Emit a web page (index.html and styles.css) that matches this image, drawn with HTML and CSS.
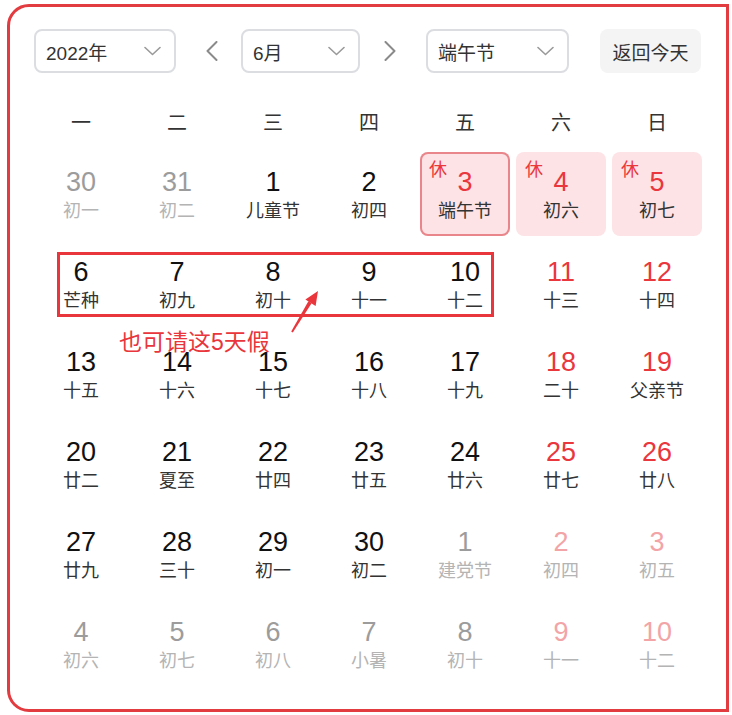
FILE: index.html
```html
<!DOCTYPE html>
<html lang="zh">
<head>
<meta charset="utf-8">
<title>日历</title>
<link rel="stylesheet" href="styles.css">
</head>
<body>
<div class="frame">
  <div class="toolbar">
    <div class="select select-year"><span>2022年</span>
      <svg class="caret" width="17" height="10" viewBox="0 0 17 10"><polyline points="1,1.5 8.5,8.5 16,1.5"/></svg>
    </div>
    <svg class="nav nav-prev" width="12" height="20" viewBox="0 0 12 20"><polyline points="10.5,1 1.5,10 10.5,19"/></svg>
    <div class="select select-month"><span>6月</span>
      <svg class="caret" width="17" height="10" viewBox="0 0 17 10"><polyline points="1,1.5 8.5,8.5 16,1.5"/></svg>
    </div>
    <svg class="nav nav-next" width="12" height="20" viewBox="0 0 12 20"><polyline points="1.5,1 10.5,10 1.5,19"/></svg>
    <div class="select select-fest"><span>端午节</span>
      <svg class="caret" width="17" height="10" viewBox="0 0 17 10"><polyline points="1,1.5 8.5,8.5 16,1.5"/></svg>
    </div>
    <div class="today-btn">返回今天</div>
  </div>

  <div class="week-head">
    <span>一</span><span>二</span><span>三</span><span>四</span><span>五</span><span>六</span><span>日</span>
  </div>

  <div class="days">
    <div class="cell other"><span class="num">30</span><span class="lunar">初一</span></div>
    <div class="cell other"><span class="num">31</span><span class="lunar">初二</span></div>
    <div class="cell"><span class="num">1</span><span class="lunar">儿童节</span></div>
    <div class="cell"><span class="num">2</span><span class="lunar">初四</span></div>
    <div class="cell red holiday selected"><span class="rest">休</span><span class="num">3</span><span class="lunar">端午节</span></div>
    <div class="cell red holiday"><span class="rest">休</span><span class="num">4</span><span class="lunar">初六</span></div>
    <div class="cell red holiday"><span class="rest">休</span><span class="num">5</span><span class="lunar">初七</span></div>

    <div class="cell"><span class="num">6</span><span class="lunar">芒种</span></div>
    <div class="cell"><span class="num">7</span><span class="lunar">初九</span></div>
    <div class="cell"><span class="num">8</span><span class="lunar">初十</span></div>
    <div class="cell"><span class="num">9</span><span class="lunar">十一</span></div>
    <div class="cell"><span class="num">10</span><span class="lunar">十二</span></div>
    <div class="cell red"><span class="num">11</span><span class="lunar">十三</span></div>
    <div class="cell red"><span class="num">12</span><span class="lunar">十四</span></div>

    <div class="cell"><span class="num">13</span><span class="lunar">十五</span></div>
    <div class="cell"><span class="num">14</span><span class="lunar">十六</span></div>
    <div class="cell"><span class="num">15</span><span class="lunar">十七</span></div>
    <div class="cell"><span class="num">16</span><span class="lunar">十八</span></div>
    <div class="cell"><span class="num">17</span><span class="lunar">十九</span></div>
    <div class="cell red"><span class="num">18</span><span class="lunar">二十</span></div>
    <div class="cell red"><span class="num">19</span><span class="lunar">父亲节</span></div>

    <div class="cell"><span class="num">20</span><span class="lunar">廿二</span></div>
    <div class="cell"><span class="num">21</span><span class="lunar">夏至</span></div>
    <div class="cell"><span class="num">22</span><span class="lunar">廿四</span></div>
    <div class="cell"><span class="num">23</span><span class="lunar">廿五</span></div>
    <div class="cell"><span class="num">24</span><span class="lunar">廿六</span></div>
    <div class="cell red"><span class="num">25</span><span class="lunar">廿七</span></div>
    <div class="cell red"><span class="num">26</span><span class="lunar">廿八</span></div>

    <div class="cell"><span class="num">27</span><span class="lunar">廿九</span></div>
    <div class="cell"><span class="num">28</span><span class="lunar">三十</span></div>
    <div class="cell"><span class="num">29</span><span class="lunar">初一</span></div>
    <div class="cell"><span class="num">30</span><span class="lunar">初二</span></div>
    <div class="cell other"><span class="num">1</span><span class="lunar">建党节</span></div>
    <div class="cell other red"><span class="num">2</span><span class="lunar">初四</span></div>
    <div class="cell other red"><span class="num">3</span><span class="lunar">初五</span></div>

    <div class="cell other"><span class="num">4</span><span class="lunar">初六</span></div>
    <div class="cell other"><span class="num">5</span><span class="lunar">初七</span></div>
    <div class="cell other"><span class="num">6</span><span class="lunar">初八</span></div>
    <div class="cell other"><span class="num">7</span><span class="lunar">小暑</span></div>
    <div class="cell other"><span class="num">8</span><span class="lunar">初十</span></div>
    <div class="cell other red"><span class="num">9</span><span class="lunar">十一</span></div>
    <div class="cell other red"><span class="num">10</span><span class="lunar">十二</span></div>
  </div>
</div>

<div class="mark-box"></div>
<div class="mark-text">也可请这5天假</div>
<svg class="mark-arrow" width="45" height="55" viewBox="280 285 45 55">
  <polygon points="291.2,331.6 292.8,332.4 311.6,303.2 308.4,301.2"/>
  <polygon points="318,291 315.6,306 305.4,299.6"/>
</svg>
</body>
</html>
```

FILE: styles.css
```css
html, body {
  margin: 0;
  padding: 0;
  background: #ffffff;
}

body {
  font-family: "Liberation Sans", "Noto Sans CJK SC", sans-serif;
  color: #333333;
}

.frame {
  box-sizing: border-box;
  width: 722px;
  height: 708px;
  margin: 4px 0 0 7px;
  border: 3px solid #e23b40;
  border-radius: 22px 0 0 22px;
  padding: 22px 0 0 23px;
}

.toolbar {
  display: flex;
  align-items: center;
  height: 44px;
}

.select {
  box-sizing: border-box;
  height: 44px;
  border: 2px solid #dcdde1;
  border-radius: 8px;
  display: flex;
  align-items: center;
  justify-content: space-between;
  padding: 0 13px 0 10px;
  font-size: 19px;
  color: #333333;
}

.select-year {
  width: 142px;
  margin-left: 1px;
}

.select-month {
  width: 119px;
  margin-left: 23px;
}

.select-fest {
  width: 143px;
  margin-left: 30px;
}

.caret polyline,
.nav polyline {
  fill: none;
  stroke-linecap: round;
  stroke-linejoin: round;
}

.caret polyline {
  stroke: #9a9a9a;
  stroke-width: 1.6;
}

.nav polyline {
  stroke: #8a8a8a;
  stroke-width: 2;
}

.nav-prev {
  margin-left: 30px;
}

.nav-next {
  margin-left: 24px;
}

.today-btn {
  box-sizing: border-box;
  width: 101px;
  height: 44px;
  margin-left: 31px;
  border-radius: 8px;
  background: #f4f4f5;
  display: flex;
  align-items: center;
  justify-content: center;
  font-size: 19px;
  color: #333333;
}

.week-head {
  display: grid;
  grid-template-columns: repeat(7, 96px);
  margin-top: 30px;
  height: 40px;
  line-height: 40px;
  text-align: center;
  font-size: 20px;
  color: #333333;
}

.days {
  display: grid;
  grid-template-columns: repeat(7, 96px);
  grid-auto-rows: 84px;
  row-gap: 6px;
  margin-top: 9px;
}

.cell {
  position: relative;
  margin: 0 3px;
  border-radius: 8px;
  display: flex;
  flex-direction: column;
  align-items: center;
  padding-top: 14px;
  box-sizing: border-box;
}

.num {
  font-size: 27px;
  line-height: 32px;
  color: #111111;
}

.lunar {
  margin-top: 2px;
  font-size: 18px;
  line-height: 22px;
  color: #333333;
}

.red .num {
  color: #ea363d;
}

.other .num {
  color: #9c9c9c;
}

.other .lunar {
  color: #b4b4b4;
}

.other.red .num {
  color: #f2a4a7;
}

.holiday {
  background: #fde3e5;
}

.selected {
  box-shadow: inset 0 0 0 2px #e8868b;
}

.rest {
  position: absolute;
  top: 7px;
  left: 9px;
  font-size: 18px;
  line-height: 22px;
  color: #ea363d;
}

.mark-box {
  position: absolute;
  left: 57px;
  top: 252px;
  width: 431px;
  height: 59px;
  border: 3px solid #e8363c;
}

.mark-text {
  position: absolute;
  left: 119px;
  top: 328px;
  font-size: 23px;
  line-height: 28px;
  color: #e8363c;
}

.mark-arrow {
  position: absolute;
  left: 280px;
  top: 285px;
}

.mark-arrow polygon {
  fill: #e8363c;
}
```
